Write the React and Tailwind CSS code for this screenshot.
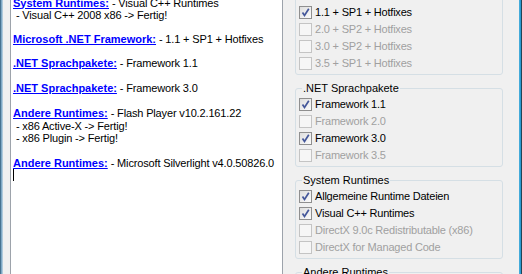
import React from 'react';

const logLines = [
    { h: 'h-[12px]', link: 'System Runtimes:', text: ' - Visual C++ Runtimes' },
    { h: 'h-[12px]', text: ' - Visual C++ 2008 x86 -> Fertig!' },
    { h: 'h-[12px]' },
    { h: 'h-[12px]', link: 'Microsoft .NET Framework:', text: ' - 1.1 + SP1 + Hotfixes' },
    { h: 'h-[12px]' },
    { h: 'h-[12.5px]', link: '.NET Sprachpakete:', text: ' - Framework 1.1' },
    { h: 'h-[12.5px]' },
    { h: 'h-[12px]', link: '.NET Sprachpakete:', text: ' - Framework 3.0' },
    { h: 'h-[12px]' },
    { h: 'h-[14px]', link: 'Andere Runtimes:', text: ' - Flash Player v10.2.161.22' },
    { h: 'h-[12px]', text: ' - x86 Active-X -> Fertig!' },
    { h: 'h-[12.5px]', text: ' - x86 Plugin -> Fertig!' },
    { h: 'h-[12.5px]' },
    { h: 'h-[12px]', link: 'Andere Runtimes:', text: ' - Microsoft Silverlight v4.0.50826.0' },
];

const groups = [
    {
        title: 'Microsoft .NET Framework',
        items: [
            { label: '1.1 + SP1 + Hotfixes', checked: true },
            { label: '2.0 + SP2 + Hotfixes', disabled: true },
            { label: '3.0 + SP2 + Hotfixes', disabled: true },
            { label: '3.5 + SP1 + Hotfixes', disabled: true },
        ]
    },
    {
        title: '.NET Sprachpakete',
        items: [
            { label: 'Framework 1.1', checked: true },
            { label: 'Framework 2.0', disabled: true },
            { label: 'Framework 3.0', checked: true },
            { label: 'Framework 3.5', disabled: true },
        ]
    },
    {
        title: 'System Runtimes',
        items: [
            { label: 'Allgemeine Runtime Dateien', checked: true },
            { label: 'Visual C++ Runtimes', checked: true },
            { label: 'DirectX 9.0c Redistributable (x86)', disabled: true },
            { label: 'DirectX for Managed Code', disabled: true },
        ]
    },
    {
        title: 'Andere Runtimes',
        items: []
    }
];

const CheckBox = ({ checked, disabled }) => (
    <div className={`w-[13px] h-[13px] shrink-0 border flex items-center justify-center ${disabled ? 'border-[#c4c4c4] bg-[#f6f6f6]' : 'border-[#8f8f8f] bg-[linear-gradient(135deg,#dedede,#fbfbfb)]'}`}>
        {checked && (
            <svg width="11" height="11" viewBox="0 0 11 11">
                <path d="M2.5 5.5 L4.5 8.5 L8.8 1.8" fill="none" stroke="#44579a" strokeWidth="1.7" />
            </svg>
        )}
    </div>
);

const GroupBox = ({ title, items }) => (
    <div className="relative h-[79px] shrink-0 border border-[#d5dfe5] rounded-[3px] pl-[3px] pt-[7px]">
        <span className="absolute left-[6px] -top-[8px] px-[1px] bg-[#f0f0f0] text-black leading-[14px]">{title}</span>
        {items.map((item) => (
            <div key={item.label} className="h-[17px] flex items-center">
                <CheckBox checked={item.checked} disabled={item.disabled} />
                <span className={`ml-[3px] tracking-[-0.2px] whitespace-nowrap ${item.disabled ? 'text-[#a0a0a0]' : 'text-black'}`}>{item.label}</span>
            </div>
        ))}
    </div>
);

export default function App() {
    return (
        <div className="w-[522px] h-[274px] overflow-hidden bg-[#f0f0f0] flex text-[11px] font-['Liberation_Sans',Arial,sans-serif]">
            <div className="w-[3px] shrink-0 bg-[linear-gradient(to_right,#2b5876,#7fa9c6,#c9dbe6)]" />

            {/* Log output */}
            <div className="ml-[7px] w-[273px] h-[300px] shrink-0 -mt-[10px] border border-[#9da3ab] bg-white pl-[2px] pt-[6px]">
                {logLines.map((line, i) => (
                    <div key={i} className={`${line.h} flex items-center whitespace-pre leading-none`}>
                        {line.link && <span className="font-bold text-[#0000ff] underline">{line.link}</span>}
                        {line.text && <span className="text-black tracking-[-0.15px]">{line.text}</span>}
                    </div>
                ))}
                <div className="h-[12px] w-px bg-black" />
            </div>

            {/* Options */}
            <div className="ml-[12px] w-[208px] shrink-0 -mt-[4px] flex flex-col gap-[13px]">
                {groups.map((g) => (
                    <GroupBox key={g.title} title={g.title} items={g.items} />
                ))}
            </div>

            <div className="flex-1" />
            <div className="w-[3px] shrink-0 bg-[linear-gradient(to_right,#4fb3df,#2b9ad0,#1a1a1a)]" />
        </div>
    );
}
